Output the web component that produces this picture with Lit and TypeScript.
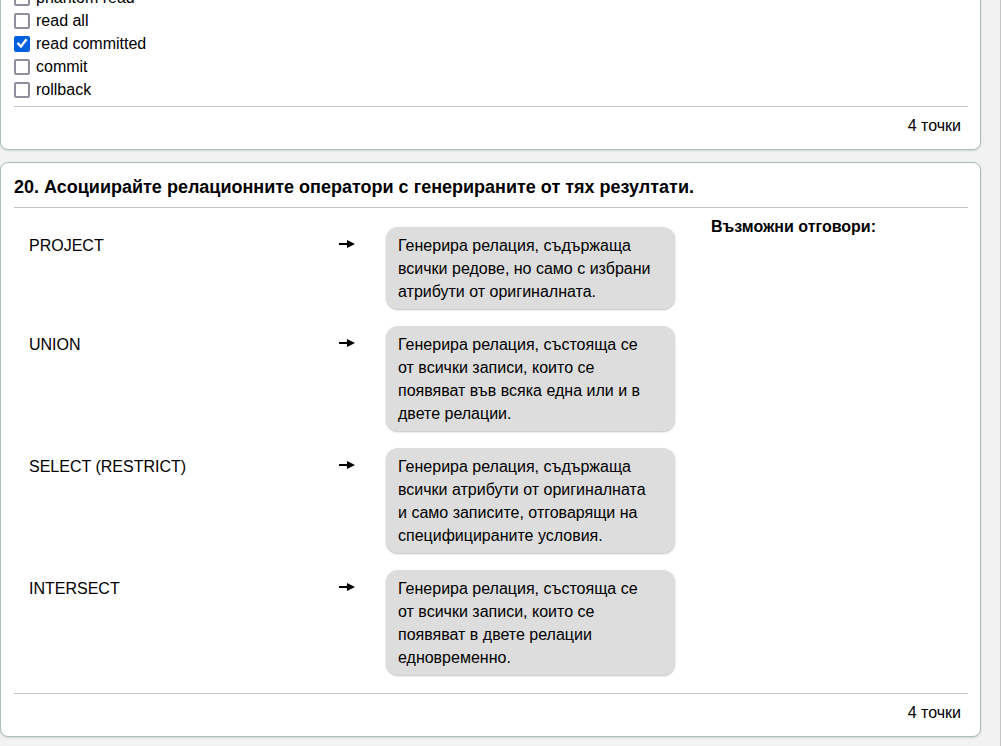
import { LitElement, html, css } from "lit";
import { customElement, property } from "lit/decorators.js";

interface Option {
  id: string;
  label: string;
  checked: boolean;
}

interface Match {
  operator: string;
  result: string;
}

const OPTIONS: Option[] = [
  { id: "phantom-read", label: "phantom read", checked: false },
  { id: "read-all", label: "read all", checked: false },
  { id: "read-committed", label: "read committed", checked: true },
  { id: "commit", label: "commit", checked: false },
  { id: "rollback", label: "rollback", checked: false },
];

const MATCHES: Match[] = [
  {
    operator: "PROJECT",
    result: "Генерира релация, съдържаща всички редове, но само с избрани атрибути от оригиналната.",
  },
  {
    operator: "UNION",
    result: "Генерира релация, състояща се от всички записи, които се появяват във всяка една или и в двете релации.",
  },
  {
    operator: "SELECT (RESTRICT)",
    result: "Генерира релация, съдържаща всички атрибути от оригиналната и само записите, отговарящи на специфицираните условия.",
  },
  {
    operator: "INTERSECT",
    result: "Генерира релация, състояща се от всички записи, които се появяват в двете релации едновременно.",
  },
];

@customElement("question-card")
export class QuestionCard extends LitElement {
  @property() points = "";

  static styles = css`
    :host {
      display: block;
      flex: none;
      padding: 12px 12px 12px 13px;
      background: #fff;
      border: 1px solid #a9bdbd;
      border-radius: 8px;
      box-shadow: 0 1px 2px rgba(0, 0, 0, 0.12);
    }
    .points {
      border-top: 1px solid #c4c4c4;
      padding: 7px 7px 0 0;
      text-align: right;
    }
  `;

  render() {
    return html`
      <slot></slot>
      <div class="points">${this.points}</div>
    `;
  }
}

@customElement("option-list")
export class OptionList extends LitElement {
  static styles = css`
    :host {
      display: block;
      padding-bottom: 5px;
    }
    .option {
      display: flex;
      align-items: center;
      gap: 6px;
    }
    .box {
      appearance: none;
      box-sizing: border-box;
      flex: none;
      width: 16px;
      height: 16px;
      margin: 0;
      border: 2px solid #8f8f9d;
      border-radius: 2px;
      background: #fff;
    }
    .box:checked {
      display: grid;
      border-color: #0060df;
      background: #0060df;
    }
    .box:checked::after {
      content: "";
      background: #fff;
      clip-path: polygon(5% 52%, 20% 38%, 40% 60%, 80% 8%, 96% 20%, 42% 90%);
    }
  `;

  render() {
    return html`${OPTIONS.map(
      (o) => html`
        <div class="option">
          <input class="box" type="checkbox" id=${o.id} .checked=${o.checked} />
          <label for=${o.id}>${o.label}</label>
        </div>
      `
    )}`;
  }
}

@customElement("match-question")
export class MatchQuestion extends LitElement {
  static styles = css`
    .title {
      margin: 0;
      padding: 1px 0 8px;
      border-bottom: 1px solid #c4c4c4;
      font-size: 18px;
      line-height: 23px;
    }
    .body {
      display: grid;
      grid-template-columns: 697fr 257fr;
      padding-top: 19px;
    }
    .row {
      display: grid;
      grid-template-columns: 309fr 48fr 289fr;
      align-items: start;
      padding: 0 36px 17px 15px;
    }
    .row:last-child {
      padding-bottom: 18px;
    }
    .operator {
      padding-top: 7px;
    }
    .arrow {
      display: block;
      margin-top: 7px;
    }
    .result {
      padding: 7px 18px 6px 12px;
      background: #ddd;
      border-radius: 12px;
      box-shadow: 0 1px 2px rgba(0, 0, 0, 0.25);
    }
    .answers {
      margin: -12px 0 0;
      font-size: 16px;
      line-height: 23px;
    }
  `;

  render() {
    return html`
      <h2 class="title">20. Асоциирайте релационните оператори с генерираните от тях резултати.</h2>
      <div class="body">
        <div>
          ${MATCHES.map(
            (m) => html`
              <div class="row">
                <div class="operator">${m.operator}</div>
                <svg class="arrow" width="18" height="20" viewBox="0 0 18 20" aria-hidden="true">
                  <path d="M1 10H10" stroke="#000" stroke-width="2" />
                  <path d="M9 6L17 10L9 14Z" />
                </svg>
                <div class="result">${m.result}</div>
              </div>
            `
          )}
        </div>
        <h3 class="answers">Възможни отговори:</h3>
      </div>
    `;
  }
}

@customElement("app-root")
export class AppRoot extends LitElement {
  static styles = css`
    :host {
      display: flex;
      flex-direction: column;
      justify-content: flex-end;
      gap: 12px;
      box-sizing: border-box;
      height: 100vh;
      overflow: hidden;
      padding: 0 19px 9px 0;
      border-right: 1px solid #c4c4c4;
      background: #f2f2f2;
      color: #000;
      font-family: "Liberation Sans", Arial, sans-serif;
      font-size: 16px;
      line-height: 23px;
    }
  `;

  render() {
    return html`
      <question-card points="4 точки"><option-list></option-list></question-card>
      <question-card points="4 точки"><match-question></match-question></question-card>
    `;
  }
}
